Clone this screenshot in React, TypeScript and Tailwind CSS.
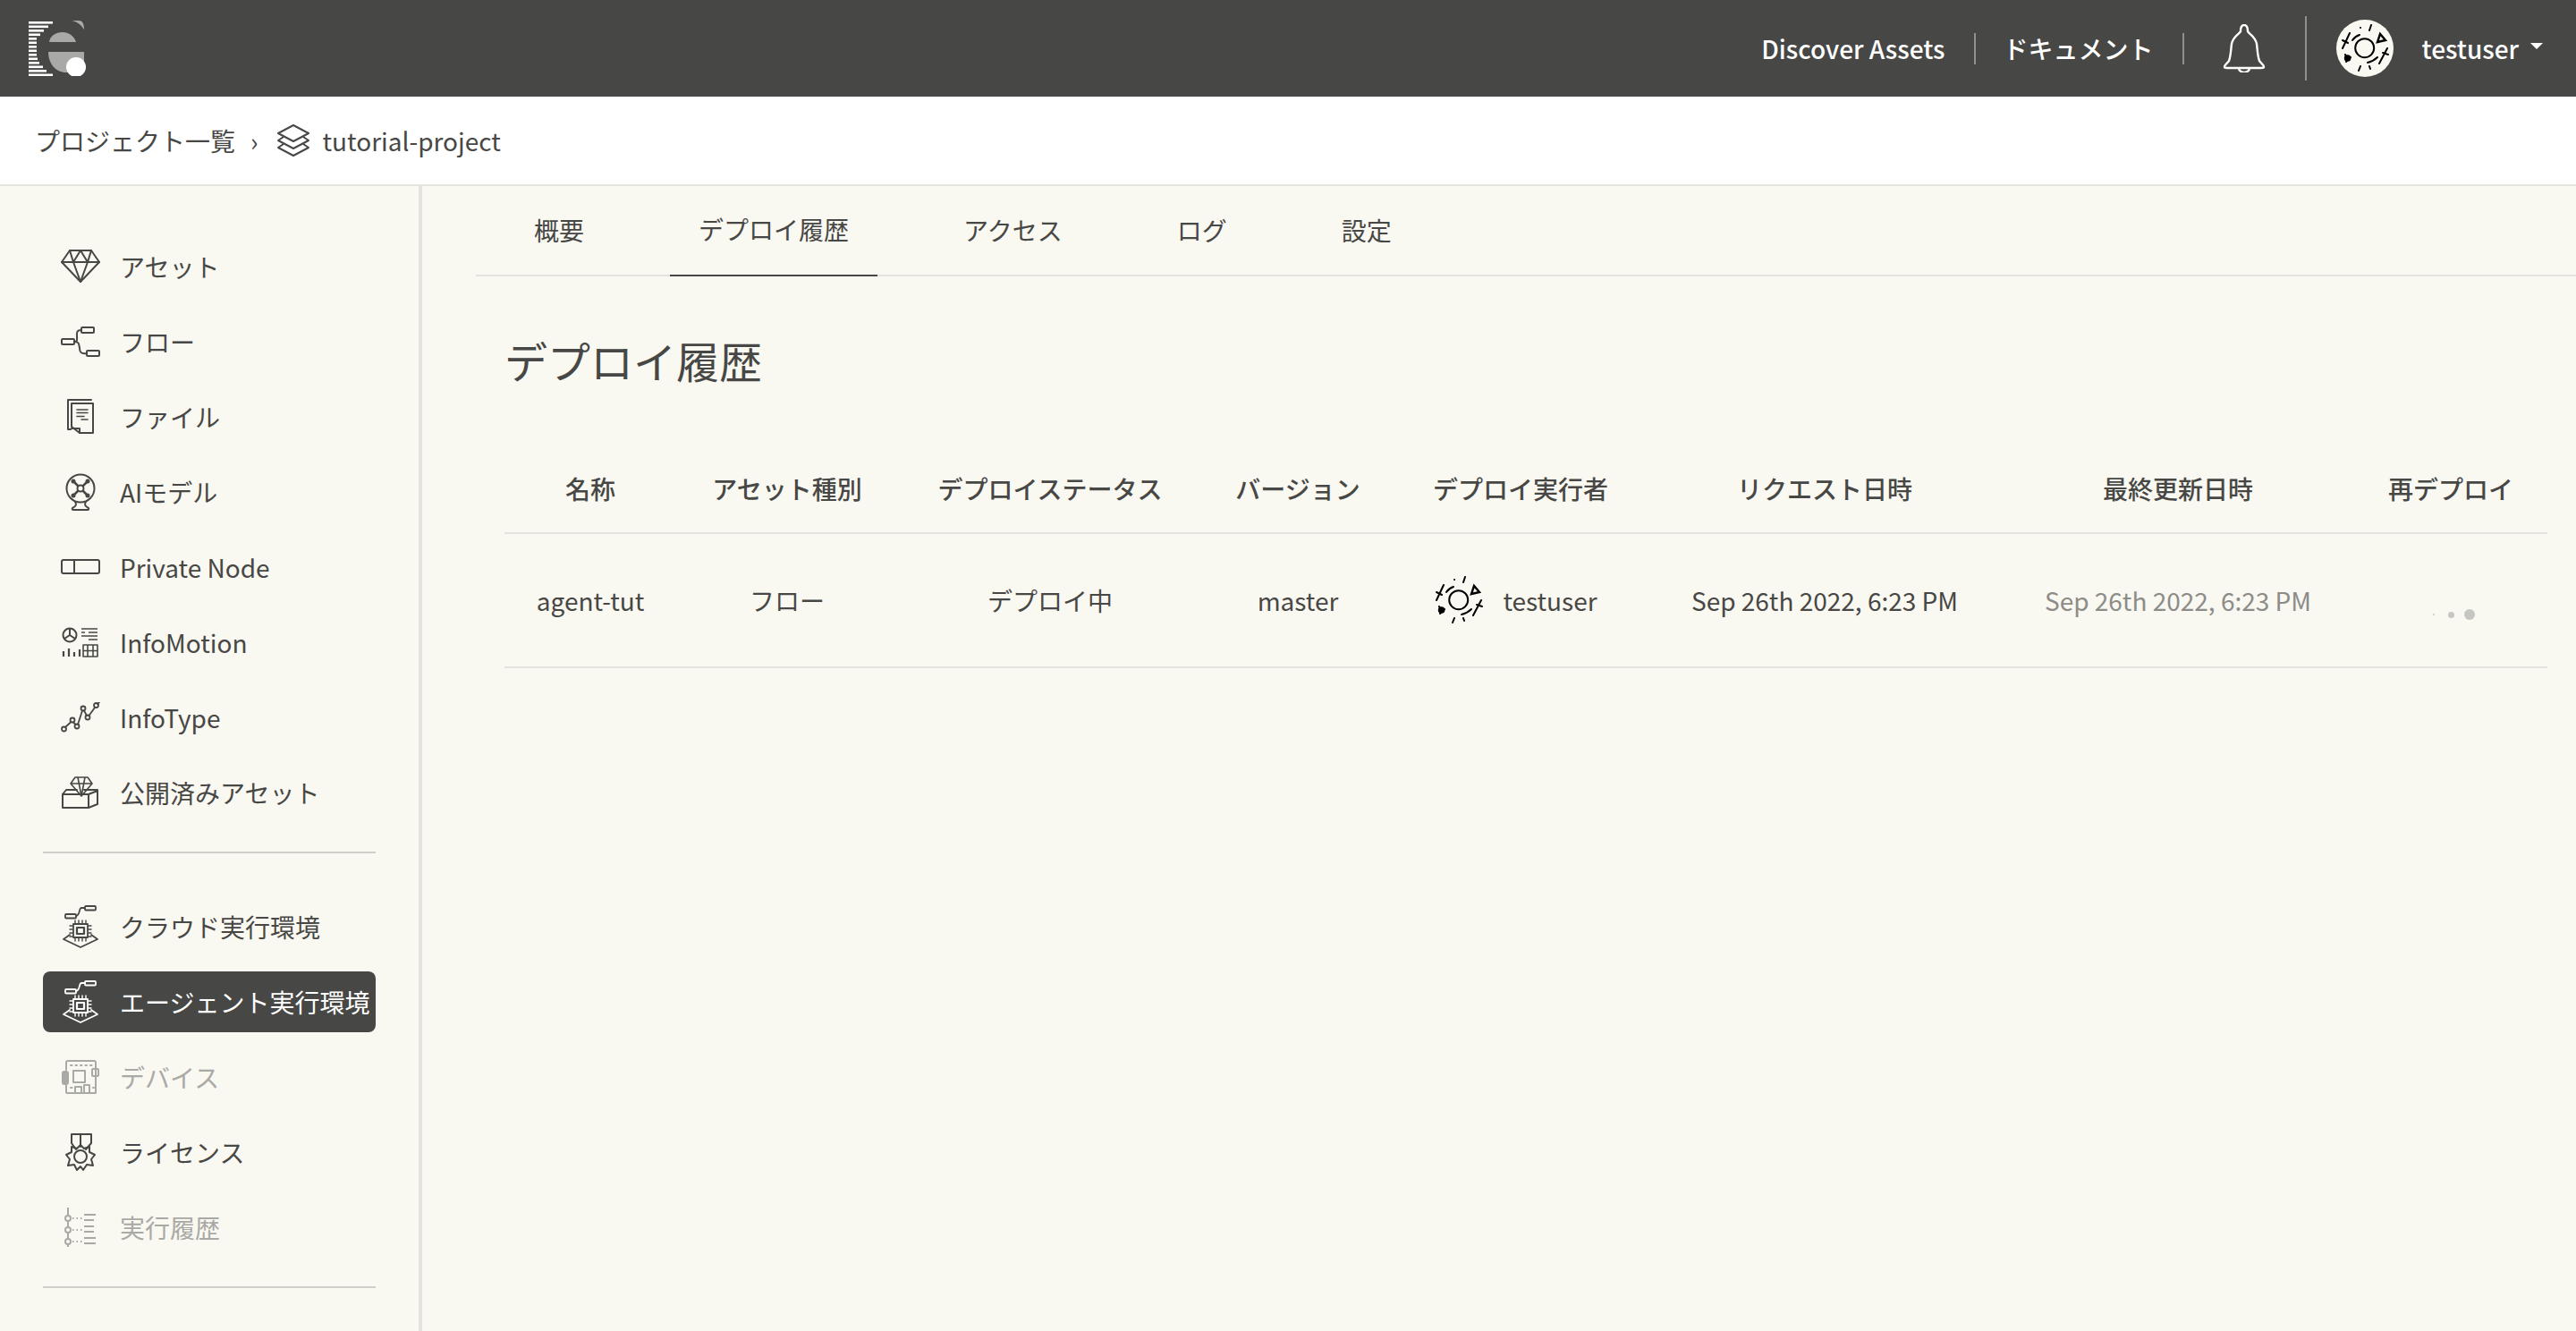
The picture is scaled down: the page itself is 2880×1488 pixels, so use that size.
import { FunctionComponent } from "react";

const Logo: FunctionComponent = () => {
  const stripes = [27, 22, 17, 13, 9, 9, 9, 9, 9, 10, 12, 16, 20, 27];
  return (
    <svg width="64" height="62" viewBox="0 0 64 62">
      {stripes.map((w, i) => (
        <rect key={i} x="0" y={1 + i * 4.5} width={w} height="2.6" fill="#fff" />
      ))}
      <path d="M48 0h8c4 0 6 3 6 10C58 4 54 1 48 0Z" fill="#a9a9a7" />
      <path d="M23 24C24 17 30 13 38 13s13 5 15 11Z" fill="#a9a9a7" />
      <path d="M22 35H62V58H42C30 58 22 48 22 35Z" fill="#a9a9a7" />
      <ellipse cx="53" cy="52" rx="11" ry="11" fill="#fff" />
    </svg>
  );
};

const Bell: FunctionComponent = () => (
  <svg width="48" height="54" viewBox="0 0 48 54" fill="none" stroke="#fff" strokeWidth="2.4" strokeLinejoin="round">
    <path d="M24 1c-3 0-4 3-4 7-1 3-8 5-10 14-1 8-1 14-3 19-2 3-5 4-5 7 0 1 1 1 3 1h38c2 0 3 0 3-1 0-3-3-4-5-7-2-5-2-11-3-19-2-9-9-11-10-14 0-4-1-7-4-7Z" />
    <path d="M18 49c0 3 3 5 6 5s6-2 6-5" />
  </svg>
);

const UserMark: FunctionComponent<{ size: number }> = ({ size }) => (
  <svg width={size} height={size} viewBox="0 0 54 54" fill="none" stroke="#000" strokeWidth="2" strokeLinecap="round">
    <circle cx="26.700" cy="26.700" r="10.500" />
    <path d="M13 18c2-3 5-5 8-6M30 43c4-1 8-3 11-6" />
    <path d="M10 10 2 27M2 18l6 3M52 27l-9 17M47 32l6 2M34 1l-2 6M22 4h.1M22 47l-2 5M32 47l1 3" />
    <path d="M44 11l-3 9 9-2Z" strokeWidth="2.400" />
    <circle cx="7.600" cy="38" r="2.800" fill="#000" />
    <path d="M5 34l1 2M11 37l-1 1M6 42l1-1" />
  </svg>
);

const Layers: FunctionComponent = () => (
  <svg width="38" height="36" viewBox="0 0 38 36" fill="none" stroke="#474745" strokeWidth="2" strokeLinejoin="round">
    <path d="M19 1 36 10 19 19 2 10Z" />
    <path d="M8 14 2 18 19 27 36 18 30 14" />
    <path d="M8 22 2 26 19 35 36 26 30 22" />
  </svg>
);

const iconProps = {
  fill: "none",
  stroke: "currentColor",
  strokeWidth: 2,
  strokeLinejoin: "round" as const,
  strokeLinecap: "round" as const,
};

const DiamondIcon = () => (
  <svg width="44" height="38" viewBox="0 0 44 38" {...iconProps}>
    <path d="M10 1H34L43 14 22 36 1 14Z" />
    <path d="M1 14H43M10 1 14 14 22 36 30 14 34 1M14 14 22 1 30 14" />
  </svg>
);

const FlowIcon = () => (
  <svg width="44" height="34" viewBox="0 0 44 34" {...iconProps}>
    <rect x="23" y="1" width="14" height="6" rx="1" />
    <rect x="1" y="14" width="14" height="6" rx="1" />
    <rect x="29" y="27" width="14" height="6" rx="1" />
    <path d="M23 4c-6 0-5 4-5 7 0 4 1 6-3 6M15 17c6 0 5 3 6 7 0 4 1 7 8 6" />
  </svg>
);

const FileIcon = () => (
  <svg width="32" height="40" viewBox="0 0 32 40" {...iconProps}>
    <path d="M28 1H2V34H5" />
    <path d="M6 5H30V38H15L6 31Z" />
    <path d="M6 33H15V38" />
    <path d="M12 12H24M12 15.500H24M12 19.500H20M17 23H24M12 12h12" strokeWidth="1.6" />
  </svg>
);

const FanIcon = () => (
  <svg width="34" height="42" viewBox="0 0 34 42" {...iconProps}>
    <circle cx="17" cy="17" r="15.500" />
    <circle cx="17" cy="17" r="3.500" />
    <path d="M14 14 9 9M20 14 25 9M14 20 9 25M20 20 25 25" strokeWidth="2.500" />
    <circle cx="9" cy="9" r="1.500" fill="currentColor" />
    <circle cx="25" cy="9" r="1.500" fill="currentColor" />
    <circle cx="9" cy="25" r="1.500" fill="currentColor" />
    <circle cx="25" cy="25" r="1.500" fill="currentColor" />
    <path d="M11 32c2 3 1 5-3 7-1 2 1 2 2 2H24c1 0 3 0 2-2-4-2-5-4-3-7" />
  </svg>
);

const NodeIcon = () => (
  <svg width="44" height="18" viewBox="0 0 44 18" {...iconProps}>
    <rect x="1" y="1" width="42" height="15" rx="2" />
    <path d="M15 1V16" />
  </svg>
);

const MotionIcon = () => (
  <svg width="42" height="34" viewBox="0 0 42 34" {...iconProps} strokeLinecap="butt">
    <circle cx="9" cy="9" r="7.500" />
    <path d="M9 2V9L3 13M9 9 15 13" />
    <path d="M22 2H40M30 6H40M22 6H26M22 10H40M30 14H40" strokeWidth="1.500" />
    <path d="M2 33V27M8 33V24M14 33V28M20 33V25" strokeWidth="2.200" />
    <rect x="24" y="20" width="16" height="13" strokeWidth="1.600" />
    <path d="M29 20V33M35 20V33M24 26.500H40" strokeWidth="1.600" />
  </svg>
);

const LineIcon = () => (
  <svg width="44" height="34" viewBox="0 0 44 34" {...iconProps} strokeWidth={1.800}>
    <circle cx="3.500" cy="30" r="2.500" />
    <circle cx="13" cy="20" r="2.500" />
    <circle cx="18" cy="27" r="2.500" />
    <circle cx="25" cy="7" r="2.500" />
    <circle cx="30" cy="17" r="2.500" />
    <circle cx="39.500" cy="3.500" r="2.500" />
    <path d="M5 28 11.500 22M14 22.500 16.500 25M19 25 24 9.500M26 9.500 29 15M31.500 15 38 6M41 2 43 0" />
  </svg>
);

const PublishIcon = () => (
  <svg width="42" height="36" viewBox="0 0 42 36" {...iconProps}>
    <path d="M1 20H30V35H1ZM30 20 40 16V31L30 35" />
    <path d="M1 20 5 15H17M25 15H40" />
    <path d="M15 1H29L34 8 22 22 10 8ZM10 8H34M18 1 22 22 26 1" strokeWidth="1.600" />
  </svg>
);

const ClusterIcon = () => (
  <svg width="40" height="48" viewBox="0 0 40 48" {...iconProps} strokeWidth={1.800}>
    <rect x="25" y="1" width="12" height="4.500" rx="1" />
    <rect x="3" y="10" width="12" height="4.500" rx="1" />
    <path d="M25 3H21C18 3 20 11 15 12" />
    <rect x="12" y="21" width="16" height="15" />
    <rect x="16" y="25" width="8" height="7" strokeWidth="2.200" />
    <path d="M14 17V20M18 17V20M22 17V20M26 17V20M14 37V40M18 37V40M22 37V40M26 37V40M8 23H11M8 27H11M8 31H11M8 35H11M29 23H32M29 27H32M29 31H32M29 35H32" strokeWidth="1.400" />
    <path d="M8 33 1 38 20 47 39 38 32 33" />
  </svg>
);

const DeviceIcon = () => (
  <svg width="42" height="38" viewBox="0 0 42 38" {...iconProps}>
    <path d="M5 11V3C5 1 6 1 7 1H36C38 1 38 2 38 3V37H6C5 37 5 36 5 35V27" />
    <rect x="1" y="13" width="6" height="14" rx="2" fill="currentColor" />
    <rect x="34" y="10" width="7" height="8" rx="1" />
    <rect x="13" y="12" width="13" height="13" />
    <rect x="15" y="30" width="7" height="7" />
    <rect x="25" y="28" width="6" height="9" />
    <path d="M10 6H34M10 31H12M35 31H36" strokeDasharray="1.500 4" />
  </svg>
);

const LicenseIcon = () => (
  <svg width="34" height="42" viewBox="0 0 34 42" {...iconProps}>
    <path d="M7 1H29V11L23 18M7 1V11L12 18M17 1V15" />
    <path d="M17 13 21 17 27 15 27 21 33 24 29 29 31 36 24 35 20 41 17 37 13 41 10 35 3 36 5 29 1 24 7 21 7 15 13 17Z" />
    <circle cx="17" cy="26" r="7" />
  </svg>
);

const HistoryIcon = () => (
  <svg width="36" height="44" viewBox="0 0 36 44" {...iconProps} strokeLinecap="butt">
    <path d="M4 0V9M4 15V22M4 28V35M4 41V44" />
    <circle cx="4" cy="12" r="3" />
    <circle cx="4" cy="25" r="3" />
    <circle cx="4" cy="38" r="3" />
    <path d="M9 12H20M9 25H20M9 38H20" strokeDasharray="1.500 3" />
    <path d="M22 8H35M22 14H33M22 21H33M22 27H33M22 34H35M22 40H35" />
  </svg>
);

const upper = [
  { label: "アセット", icon: <DiamondIcon /> },
  { label: "フロー", icon: <FlowIcon /> },
  { label: "ファイル", icon: <FileIcon /> },
  { label: "AIモデル", icon: <FanIcon /> },
  { label: "Private Node", icon: <NodeIcon /> },
  { label: "InfoMotion", icon: <MotionIcon /> },
  { label: "InfoType", icon: <LineIcon /> },
  { label: "公開済みアセット", icon: <PublishIcon /> },
];

const lower = [
  { label: "クラウド実行環境", icon: <ClusterIcon /> },
  { label: "エージェント実行環境", icon: <ClusterIcon />, active: true },
  { label: "デバイス", icon: <DeviceIcon />, muted: true },
  { label: "ライセンス", icon: <LicenseIcon /> },
  { label: "実行履歴", icon: <HistoryIcon />, muted: true },
];

interface NavItem {
  label: string;
  icon: React.ReactNode;
  active?: boolean;
  muted?: boolean;
}

const NavRow: FunctionComponent<{ item: NavItem }> = ({ item }) => (
  <div
    className={`flex h-[68px] items-center rounded-lg mb-4 ${
      item.active
        ? "bg-[#474745] text-white"
        : item.muted
          ? "text-[#a9a9a6]"
          : "text-[#474745]"
    }`}
  >
    <div className="flex w-[86px] shrink-0 items-center justify-center pr-[2px]">
      {item.icon}
    </div>
    <span className="whitespace-nowrap">{item.label}</span>
  </div>
);

const columns = [
  { label: "名称", width: "w-[192px]" },
  { label: "アセット種別", width: "w-[248px]" },
  { label: "デプロイステータス", width: "w-[340px]" },
  { label: "バージョン", width: "w-[214px]" },
  { label: "デプロイ実行者", width: "w-[284px]" },
  { label: "リクエスト日時", width: "w-[396px]" },
  { label: "最終更新日時", width: "w-[394px]" },
  { label: "再デプロイ", width: "w-[216px]" },
];

const tabs = ["概要", "デプロイ履歴", "アクセス", "ログ", "設定"];

export default function App() {
  return (
    <div className="h-[1488px] overflow-hidden bg-[#f9f8f1] font-['Noto_Sans_CJK_JP','Noto_Sans',sans-serif] text-[28px] leading-none text-[#474745]">
      <header className="flex h-[108px] items-center justify-between bg-[#474745] pl-[32px] pr-[37px] text-white">
        <Logo />
        <div className="flex items-center font-medium">
          <span className="pr-[32px]">Discover Assets</span>
          <div className="h-[35px] w-[2px] bg-[#8f8f8d]" />
          <span className="pl-[31px] pr-[32px]">ドキュメント</span>
          <div className="h-[35px] w-[2px] bg-[#8f8f8d]" />
          <div className="ml-[43px] mr-[44px]">
            <Bell />
          </div>
          <div className="h-[72px] w-[2px] bg-[#8f8f8d]" />
          <div className="ml-[33px] flex h-[64px] w-[64px] items-center justify-center rounded-full bg-[#f9f8f1]">
            <UserMark size={54} />
          </div>
          <span className="ml-[32px]">testuser</span>
          <div className="ml-[13px] mb-[6px] h-0 w-0 border-x-[7px] border-t-[7px] border-x-transparent border-t-white" />
        </div>
      </header>

      <div className="flex h-[100px] items-center border-b-2 border-[#e4e3dd] bg-white pl-[39px]">
        <span>プロジェクト一覧</span>
        <span className="ml-[17px] mr-[21px]">›</span>
        <Layers />
        <span className="ml-[13px]">tutorial-project</span>
      </div>

      <div className="flex h-[1280px]">
        <aside className="w-[472px] shrink-0 border-r-4 border-[#e4e3dd] pl-[48px] pr-[48px] pt-[56px]">
          {upper.map((item) => (
            <NavRow key={item.label} item={item} />
          ))}
          <div className="mb-[48px] mt-[32px] h-[2px] w-[372px] bg-[#cfcfca]" />
          {lower.map((item) => (
            <NavRow key={item.label} item={item} />
          ))}
          <div className="mt-[32px] h-[2px] w-[372px] bg-[#cfcfca]" />
        </aside>

        <main className="min-w-0 flex-1">
          <nav className="ml-[60px] flex h-[101px] border-b-2 border-[#e4e3dd] pl-[33px]">
            {tabs.map((tab) => (
              <div
                key={tab}
                className={`mr-[64px] -mb-[2px] flex items-center px-8 pb-[4px] ${
                  tab === "デプロイ履歴" ? "border-b-2 border-[#474745]" : ""
                }`}
              >
                {tab}
              </div>
            ))}
          </nav>

          <h1 className="ml-[92px] mt-[69px] text-[48px] font-normal leading-none">
            デプロイ履歴
          </h1>

          <table className="ml-[92px] mt-[70px] w-[2284px] table-fixed border-collapse">
            <thead>
              <tr className="h-[100px] border-b-2 border-[#e4e3dd]">
                {columns.map((col) => (
                  <th key={col.label} className={`${col.width} font-medium`}>
                    {col.label}
                  </th>
                ))}
              </tr>
            </thead>
            <tbody>
              <tr className="h-[150px] border-b-2 border-[#e4e3dd] text-center">
                <td>agent-tut</td>
                <td>フロー</td>
                <td>デプロイ中</td>
                <td>master</td>
                <td>
                  <div className="flex items-center justify-center gap-[22px] pr-[10px]">
                    <UserMark size={54} />
                    <span>testuser</span>
                  </div>
                </td>
                <td>Sep 26th 2022, 6:23 PM</td>
                <td className="text-[#8c8c89]">Sep 26th 2022, 6:23 PM</td>
                <td>
                  <div className="flex items-center justify-center pl-[7px] pt-[32px]">
                    <div className="h-[2px] w-[2px] rounded-full bg-[#c6c6c3]" />
                    <div className="ml-[15px] h-[7px] w-[7px] rounded-full bg-[#c6c6c3]" />
                    <div className="ml-[11px] h-[12px] w-[12px] rounded-full bg-[#c6c6c3]" />
                  </div>
                </td>
              </tr>
            </tbody>
          </table>
        </main>
      </div>
    </div>
  );
}
